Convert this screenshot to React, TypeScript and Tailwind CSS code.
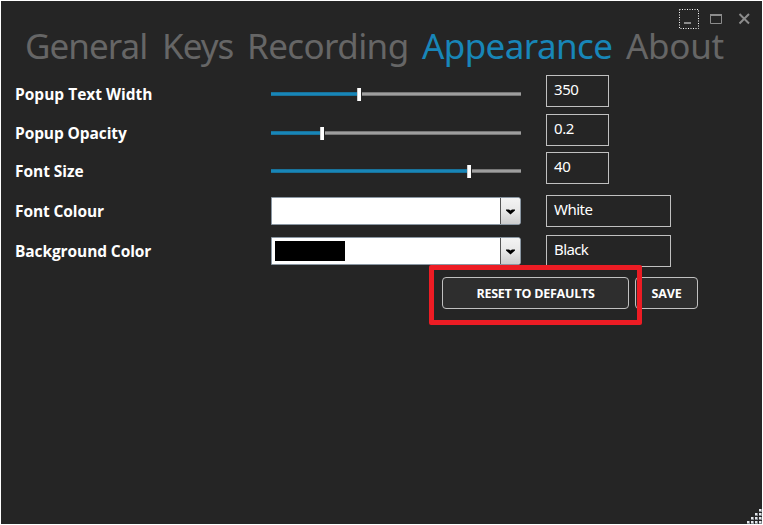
import React from "react";

const tabs = [
  { name: "General", box: "w-[137px] tracking-[-0.95px]" },
  { name: "Keys", box: "w-[85px] tracking-[-1px]" },
  { name: "Recording", box: "w-[175px] tracking-[-0.6px]" },
  { name: "Appearance", box: "w-[204px] tracking-[-0.6px]", active: true },
  { name: "About", box: "w-[110px] tracking-[-0.3px]" },
];

function Label({ children, className }: { children: string; className: string }) {
  return (
    <div className={`w-[256px] shrink-0 text-[15.5px] leading-[20px] font-bold text-white ${className}`}>
      {children}
    </div>
  );
}

function Slider({ fill }: { fill: number }) {
  return (
    <div className="flex h-[13px] w-[250px] shrink-0 items-center">
      <div
        className="h-[4px] border-y border-[#19729a] bg-[#1886b8]"
        style={{ width: fill }}
      />
      <div className="h-[13px] w-[4px] border-l border-[#cfcfcf] bg-white" />
      <div className="ml-px h-[4px] flex-1 border-y border-[#777777] bg-[#9e9e9e]" />
    </div>
  );
}

function Combo({ swatch }: { swatch: string }) {
  return (
    <div className="flex h-[28px] w-[250px] shrink-0 rounded-r-[3px] border border-[#8a97a3] bg-white">
      <div className="flex-1 p-[3px]">
        <div className={`h-[20px] w-[70px] ${swatch}`} />
      </div>
      <div className="flex w-[20px] items-center justify-center rounded-r-[2px] border-l border-[#555555] bg-gradient-to-b from-[#f4f4f4] via-[#e8e8e8] to-[#cdcdcd]">
        <svg width="9" height="6" viewBox="0 0 9 6" className="mt-px">
          <path d="M0 0.5H3L4.5 1.5L6 0.5H9V1.5L4.5 5.5L0 1.5Z" fill="#000" />
        </svg>
      </div>
    </div>
  );
}

function Field({ value, box }: { value: string; box: string }) {
  return (
    <div
      className={`ml-[25px] h-[32px] shrink-0 border border-[#c0c0c0] pt-[3px] pl-[7px] font-['Noto_Sans',sans-serif] text-[15px] leading-[20px] text-white ${box}`}
    >
      {value}
    </div>
  );
}

export default function App() {
  return (
    <div className="h-[525px] w-[763px] overflow-hidden bg-white p-px font-['Open_Sans','Noto_Sans',sans-serif]">
      <div className="relative flex h-[523px] w-[761px] flex-col bg-[#252525]">
        <div className="flex h-[28px] shrink-0 justify-end pt-[8px] pr-[11px]">
          <svg width="72" height="20" viewBox="0 0 72 20" fill="none">
            <rect x="0.5" y="0.5" width="19" height="19" stroke="#fff" strokeDasharray="1 1.5" />
            <path d="M5 14H12" stroke="#8c8c8c" strokeWidth="2" />
            <path d="M31.5 5V14.5H42.5V5" stroke="#8c8c8c" />
            <path d="M31 6H43" stroke="#8c8c8c" strokeWidth="2" />
            <path d="M60.5 5L70 14.5M70 5L60.5 14.5" stroke="#8c8c8c" strokeWidth="2" />
          </svg>
        </div>

        <div className="flex h-[45px] shrink-0 pl-[24px] font-['Noto_Sans',sans-serif] text-[35px] leading-[34px] whitespace-nowrap">
          {tabs.map((t) => (
            <div key={t.name} className={`${t.box} shrink-0 ${t.active ? "text-[#1886b8]" : "text-[#666666]"}`}>
              {t.name}
            </div>
          ))}
        </div>

        <div className="flex flex-col pl-[14px]">
          <div className="mt-px flex h-[32px] items-center">
            <Label className="pt-[6px]">Popup Text Width</Label>
            <div className="pt-[6px]"><Slider fill={86} /></div>
            <Field value="350" box="w-[63px] tracking-[-0.4px]" />
          </div>
          <div className="mt-[7px] flex h-[32px] items-center">
            <Label className="pt-[6px] tracking-[-0.1px]">Popup Opacity</Label>
            <div className="pt-[6px]"><Slider fill={49} /></div>
            <Field value="0.2" box="w-[63px] tracking-[-0.4px]" />
          </div>
          <div className="mt-[6px] flex h-[32px] items-center">
            <Label className="pt-[6px] tracking-[-0.05px]">Font Size</Label>
            <div className="pt-[6px]"><Slider fill={196} /></div>
            <Field value="40" box="w-[63px] tracking-[-0.4px]" />
          </div>
          <div className="mt-[11px] flex h-[32px] items-center">
            <Label className="tracking-[-0.1px]">Font Colour</Label>
            <Combo swatch="bg-white" />
            <Field value="White" box="w-[125px] tracking-[-0.5px]" />
          </div>
          <div className="mt-[8px] flex h-[32px] items-center">
            <Label className="tracking-[-0.1px]">Background Color</Label>
            <Combo swatch="bg-black" />
            <Field value="Black" box="w-[125px] tracking-[-0.6px]" />
          </div>
        </div>

        <div className="mt-[10px] flex gap-[6px] pl-[441px] text-[12.5px] font-bold text-white">
          <button className="h-[32px] w-[187px] rounded-[4px] border border-[#c0c0c0] bg-[#2e2e2e] pt-[2px] tracking-[-0.25px]">
            RESET TO DEFAULTS
          </button>
          <button className="h-[32px] w-[63px] rounded-[4px] border border-[#c0c0c0] bg-[#2e2e2e] pt-[2px] tracking-[-0.1px]">
            SAVE
          </button>
        </div>

        <div className="absolute top-[264px] left-[428px] h-[60px] w-[213px] rounded-[2px] border-[5px] border-[#ed1c24]" />

        <svg className="absolute right-0 bottom-0" width="15" height="15" viewBox="0 0 15 15">
          {[[12, 0], [8, 4], [12, 4], [4, 8], [8, 8], [12, 8], [0, 12], [4, 12], [8, 12], [12, 12]].map(([x, y]) => (
            <g key={`${x}-${y}`}>
              <rect x={x} y={y} width="3" height="3" fill="#85898f" />
              <rect x={x} y={y} width="2" height="2" fill="#e3e6ea" />
            </g>
          ))}
        </svg>
      </div>
    </div>
  );
}
